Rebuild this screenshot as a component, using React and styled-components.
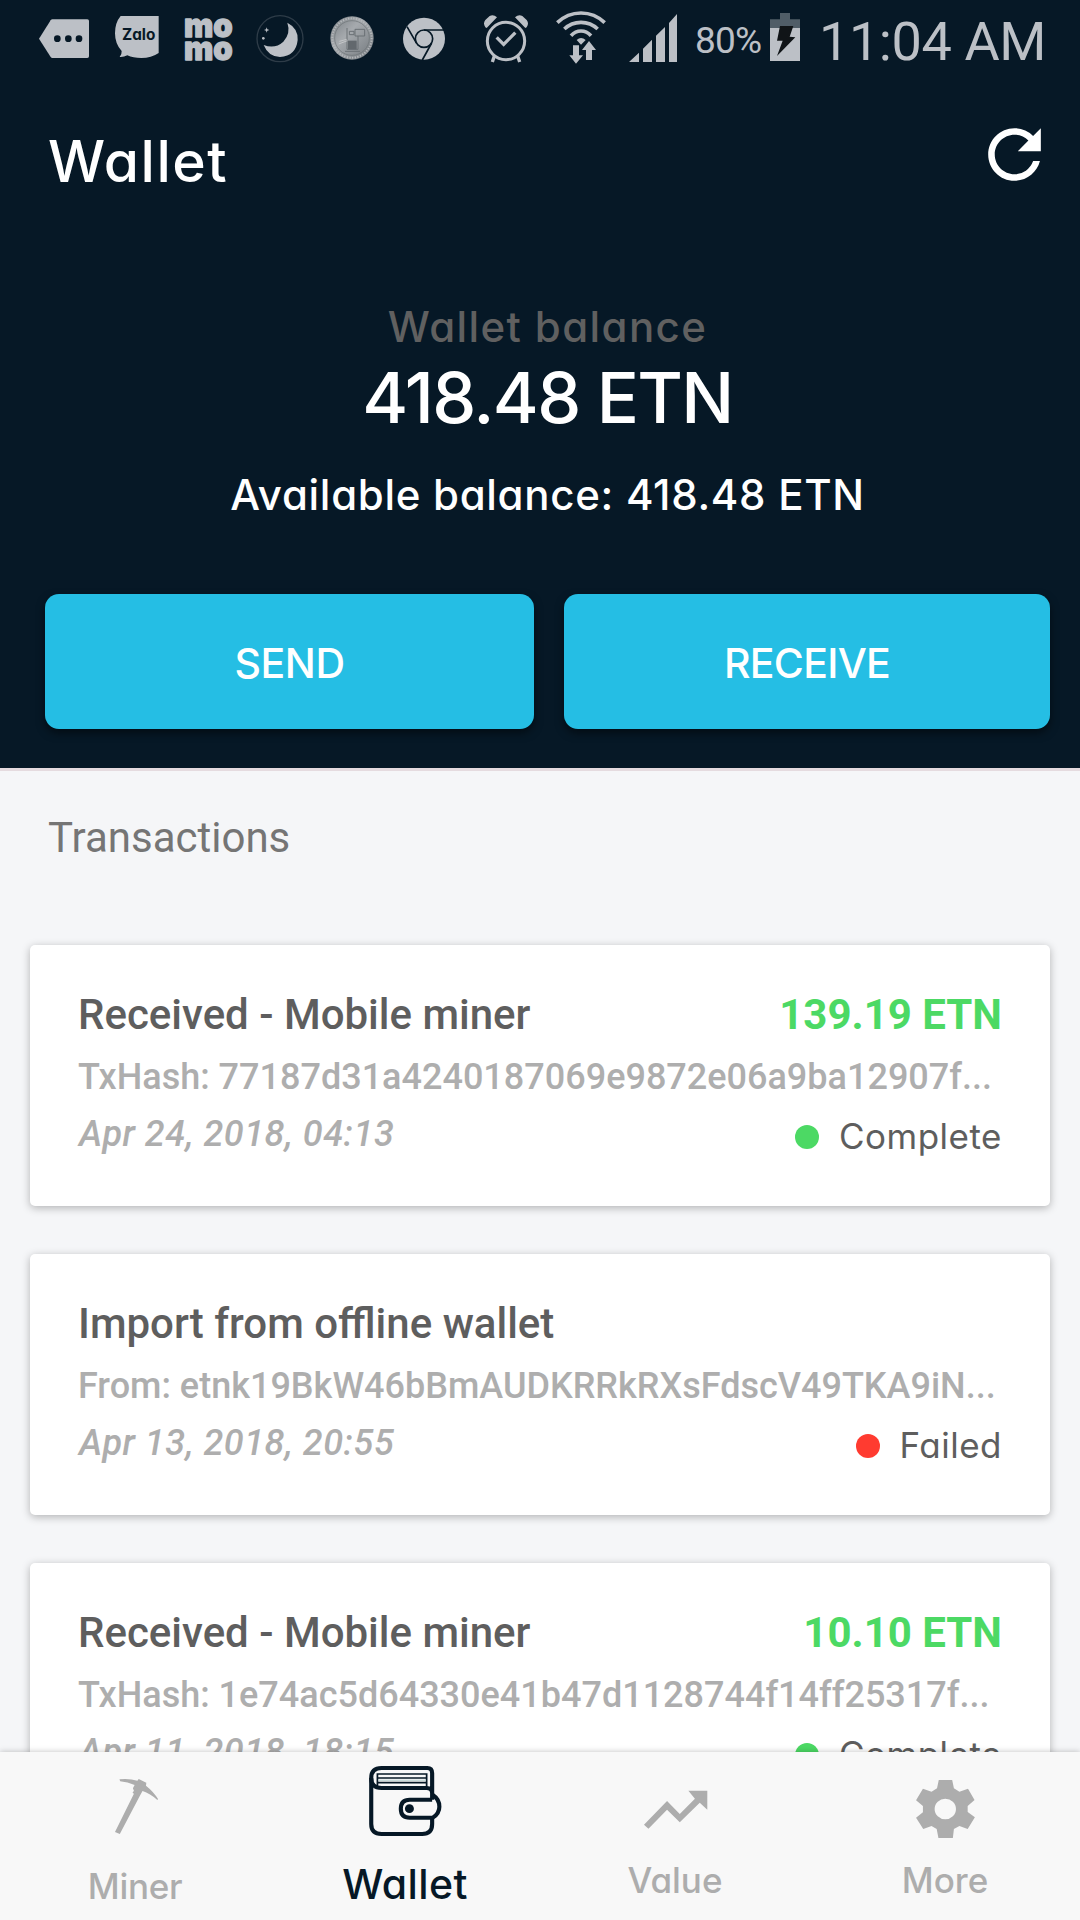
import React from 'react';
import styled, { createGlobalStyle } from 'styled-components';
import { MdRefresh } from 'react-icons/md';

const navy = '#061826';
const silver = '#bcc0c6';
const muted = '#adadad';
const rounded = `'Inter', 'Lato', sans-serif`;

const GlobalStyle = createGlobalStyle`
  * {
    box-sizing: border-box;
  }
  body {
    margin: 0;
    background: #f5f6f8;
    font-family: Roboto, sans-serif;
  }
  button {
    border: 0;
    padding: 0;
    background: none;
    font: inherit;
  }
`;

const Screen = styled.div`
  width: 1080px;
  height: 1920px;
  display: flex;
  flex-direction: column;
  overflow: hidden;
`;

const Header = styled.header`
  height: 771px;
  flex: none;
  background: ${navy};
  border-bottom: 3px solid #e5dbdf;
`;

const StatusBar = styled.div`
  height: 80px;
  display: flex;
  align-items: center;
  color: ${silver};
`;

const StatusIcon = styled.svg`
  flex: none;
  height: 80px;
  width: ${({ $width }) => $width}px;
  margin-left: ${({ $gap }) => $gap || 0}px;
  fill: currentColor;
  overflow: visible;
`;

const Percent = styled.span`
  width: 75px;
  margin-left: 18px;
  font-size: 37px;
  line-height: 80px;
  letter-spacing: -0.8px;
  padding-top: 1px;
`;

const Clock = styled.span`
  margin-left: auto;
  padding: 3px 34px 0 0;
  font-size: 54px;
  font-weight: 400;
  line-height: 80px;
  letter-spacing: -0.4px;
  white-space: nowrap;
`;

const AppBar = styled.div`
  height: 164px;
  display: flex;
  align-items: center;
  justify-content: space-between;
  padding: 0 26px 0 48px;
  color: #fff;
`;

const RefreshIcon = styled(MdRefresh)`
  font-size: 79px;
  margin-bottom: 15px;
`;

const RoundedText = styled.div`
  font-family: ${rounded};
  font-feature-settings: 'cv11', 'cv05' 0;
  font-size: ${({ $size }) => $size}px;
  line-height: ${({ $line }) => $line}px;
  letter-spacing: ${({ $track }) => $track || 0}px;
  font-weight: ${({ $weight }) => $weight || 500};
  color: ${({ $color }) => $color || '#fff'};
  white-space: nowrap;
`;

const Balance = styled.section`
  padding: 56px 30px 0 45px;
  display: flex;
  flex-direction: column;
  align-items: center;
`;

const Actions = styled.div`
  display: grid;
  grid-template-columns: 489px 486px;
  gap: 30px;
  padding: 47px 30px 0 45px;
`;

const ActionButton = styled.button`
  height: 135px;
  border-radius: 14px;
  background: #25bee4;
  box-shadow: 0 4px 8px rgba(0, 0, 0, 0.5);
  display: flex;
  align-items: center;
  justify-content: center;
  padding-top: 3px;
`;

const Transactions = styled.main`
  flex: 1;
  min-height: 0;
  overflow: hidden;
  background: #f5f6f8;
`;

const SectionTitle = styled.h2`
  margin: 0 0 42px;
  padding-left: 48px;
  font-size: 42px;
  font-weight: 400;
  line-height: 133px;
  height: 132px;
  color: #757575;
`;

const List = styled.div`
  display: flex;
  flex-direction: column;
  gap: 48px;
  padding: 0 30px;
`;

const Card = styled.article`
  height: 261px;
  flex: none;
  padding: 38px 48px 0 48px;
  border-radius: 5px;
  background: #fff;
  box-shadow: 0 2px 8px rgba(0, 0, 0, 0.28);
`;

const CardRow = styled.div`
  display: flex;
  justify-content: space-between;
  height: ${({ $height }) => $height}px;
  line-height: ${({ $height }) => $height + 1}px;
`;

const CardTitle = styled.div`
  font-size: 42px;
  font-weight: 500;
  color: #5e5e5e;
`;

const Amount = styled.div`
  font-size: 42px;
  font-weight: 700;
  color: #4cd964;
`;

const Hash = styled.div`
  padding-top: 1px;
  font-size: 36px;
  font-weight: 500;
  color: #aeaeae;
  white-space: nowrap;
`;

const DateText = styled(Hash)`
  padding-left: 1px;
  font-style: italic;
  letter-spacing: 0.55px;
`;

const Status = styled.div`
  display: flex;
  align-items: center;
  gap: 20px;
  padding-top: 7px;
`;

const Dot = styled.span`
  width: 24px;
  height: 24px;
  border-radius: 50%;
  background: ${({ $failed }) => ($failed ? '#ff3b30' : '#4cd964')};
`;

const StatusText = styled(RoundedText)`
  padding-bottom: 2px;
`;

const Nav = styled.nav`
  height: 168px;
  flex: none;
  display: grid;
  grid-template-columns: repeat(4, 1fr);
  background: #f8f8f8;
  box-shadow: 0 0 6px rgba(0, 0, 0, 0.25);
  z-index: 1;
`;

const Tab = styled.button`
  display: flex;
  flex-direction: column;
  align-items: center;
  color: ${({ $active }) => ($active ? navy : muted)};
`;

const TabIcon = styled.svg`
  width: 82.6px;
  height: 88px;
  flex: none;
  margin-bottom: ${({ $gap }) => $gap}px;
  fill: currentColor;
`;

const transactions = [
  {
    title: 'Received - Mobile miner',
    amount: '139.19 ETN',
    hash: 'TxHash: 77187d31a4240187069e9872e06a9ba12907f...',
    date: 'Apr 24, 2018, 04:13',
    status: 'Complete',
  },
  {
    title: 'Import from offline wallet',
    hash: 'From: etnk19BkW46bBmAUDKRRkRXsFdscV49TKA9iN...',
    date: 'Apr 13, 2018, 20:55',
    status: 'Failed',
  },
  {
    title: 'Received - Mobile miner',
    amount: '10.10 ETN',
    hash: 'TxHash: 1e74ac5d64330e41b47d1128744f14ff25317f...',
    date: 'Apr 11, 2018, 18:15',
    status: 'Complete',
  },
];

const StatusIcons = () => (
  <>
    <StatusIcon $width={50} $gap={39} viewBox="117 0 150 240">
      <path d="M157 58H262Q267 58 267 63V169Q267 174 262 174H157Q154 174 152 171L117 116L152 61Q154 58 157 58Z" />
      <g fill={navy}>
        <circle cx="172" cy="116" r="10" />
        <circle cx="205" cy="116" r="10" />
        <circle cx="237" cy="116" r="10" />
      </g>
    </StatusIcon>
    <StatusIcon $width={44} $gap={26} viewBox="346 0 132 240">
      <path d="M363 48H477V159Q455 174 425 174Q400 174 383 166Q372 172 360 171Q367 162 366 153Q346 132 346 100Q346 68 363 48Z" />
      <text x="367" y="120" fill={navy} fontFamily="Inter, sans-serif" fontWeight="700" fontSize="46" textLength="100" lengthAdjust="spacingAndGlyphs" style={{ fontFeatureSettings: "'cv11'" }}>
        Zalo
      </text>
    </StatusIcon>
    <StatusIcon $width={47} $gap={26} viewBox="555 0 141 240">
      <g
        fontFamily="Inter, sans-serif"
        fontWeight="900"
        fontSize="98"
        stroke="currentColor"
        strokeWidth="4"
        strokeLinejoin="round"
      >
        <text x="552" y="110" textLength="146" lengthAdjust="spacingAndGlyphs">mo</text>
        <text x="552" y="180" textLength="146" lengthAdjust="spacingAndGlyphs">mo</text>
      </g>
    </StatusIcon>
    <StatusIcon $width={48} $gap={24} viewBox="768 0 144 240">
      <circle cx="840" cy="116" r="69" fill="none" stroke="#2e3c48" strokeWidth="4" />
      <path d="M862 68Q895 85 893 120Q888 168 840 171Q805 170 791 135Q825 148 850 125Q873 100 862 68Z" />
      <path d="M800 82L802 88L808 90L802 92L800 98L798 92L792 90L798 88Z" />
      <circle cx="790" cy="115" r="4" />
    </StatusIcon>
    <StatusIcon $width={44} $gap={26} viewBox="990 0 132 240">
      <defs>
        <linearGradient id="coin" x1="0" y1="0" x2="1" y2="1">
          <stop offset="0" stopColor="#757b80" />
          <stop offset="0.4" stopColor="#a6aaae" />
          <stop offset="1" stopColor="#70767b" />
        </linearGradient>
      </defs>
      <circle cx="1056" cy="114" r="65" fill="url(#coin)" />
      <circle cx="1056" cy="114" r="59" fill="none" stroke="#b4b7ba" strokeWidth="6" strokeDasharray="4 4" />
      <circle cx="1056" cy="114" r="52" fill="none" stroke="#6c7276" strokeWidth="2" />
      <g fill="none" stroke="#6a7075" strokeWidth="3">
        <path d="M1041 84V148H1074V108M1048 94H1062V104H1048ZM1065 88H1094V108H1065Z" />
        <path d="M1016 132L1042 122M1018 124L1040 118" stroke="#c4c6c8" />
        <path d="M1035 154H1080" />
      </g>
      <rect x="1044" y="122" width="26" height="26" fill="#62686d" />
    </StatusIcon>
    <StatusIcon $width={43} $gap={29} viewBox="189 0 129 240">
      <circle cx="252" cy="116" r="63" />
      <g stroke={navy} strokeWidth="5" fill="none">
        <circle cx="252" cy="116" r="26" />
        <path d="M252 90H314M230 130L201 80M275 129L247 180" />
      </g>
    </StatusIcon>
    <StatusIcon $width={46} $gap={37} viewBox="429 0 138 240">
      <circle cx="498" cy="123" r="56" fill="none" stroke="currentColor" strokeWidth="9" />
      <path d="M470 112L491 133L526 98" fill="none" stroke="currentColor" strokeWidth="10" />
      <path d="M436 82Q428 70 436 60L449 48Q460 42 471 52L440 84ZM560 82Q568 70 560 60L547 48Q536 42 525 52L556 84Z" />
      <path d="M463 168L457 186M533 168L539 186" stroke="currentColor" strokeWidth="10" />
    </StatusIcon>
    <StatusIcon $width={50} $gap={27} viewBox="648 0 150 240">
      <g fill="none" stroke="currentColor" strokeWidth="11">
        <path d="M652 68Q682 39 723 39Q764 39 794 68" />
        <path d="M673 87Q694 67 723 67Q752 67 773 87" />
        <path d="M693 107Q706 93 723 93Q740 93 753 107" />
      </g>
      <path d="M710 120Q723 108 737 120L723 134Z" />
      <path d="M699 136H717V166H729L708 191L688 166H699Z" />
      <path d="M738 180H756V150H768L747 123L726 150H738Z" />
    </StatusIcon>
    <StatusIcon $width={48} $gap={23} viewBox="867 0 144 240">
      <path d="M867 186L897 158V186ZM909 186V146L936 119V186ZM948 186V107L975 81V186ZM987 186V69L1011 42V186Z" />
    </StatusIcon>
    <Percent>80%</Percent>
    <StatusIcon $width={30} viewBox="270 0 90 240">
      <path d="M300 39H330V58H360V84H270V58H300Z" fill="#505d67" />
      <path d="M270 84H360V183H270Z" />
      <path d="M300 78H340L329 110L346 112L291 168L308 122H291Z" fill="#101417" />
    </StatusIcon>
  </>
);

const Transaction = ({ title, amount, hash, date, status }) => (
  <Card>
    <CardRow $height={62}>
      <CardTitle>{title}</CardTitle>
      {amount && <Amount>{amount}</Amount>}
    </CardRow>
    <CardRow $height={62}>
      <Hash>{hash}</Hash>
    </CardRow>
    <CardRow $height={52}>
      <DateText>{date}</DateText>
      <Status>
        <Dot $failed={status === 'Failed'} />
        <StatusText $size={35} $line={52} $color="#5e5e5e" $weight={400} $track={0.5}>
          {status}
        </StatusText>
      </Status>
    </CardRow>
  </Card>
);

const App = () => (
  <Screen>
    <GlobalStyle />
    <Header>
      <StatusBar>
        <StatusIcons />
        <Clock>11:04 AM</Clock>
      </StatusBar>
      <AppBar>
        <RoundedText $size={57} $line={164} $track={1.5}>Wallet</RoundedText>
        <RefreshIcon />
      </AppBar>
      <Balance>
        <RoundedText $size={42} $line={53} $color="#606060" $track={1.4}>Wallet balance</RoundedText>
        <RoundedText $size={70} $line={89} $track={-1.6}>418.48 ETN</RoundedText>
        <RoundedText $size={42} $line={105} $track={0.7}>Available balance: 418.48 ETN</RoundedText>
      </Balance>
      <Actions>
        <ActionButton>
          <RoundedText $size={41} $line={60} $track={-0.4}>SEND</RoundedText>
        </ActionButton>
        <ActionButton>
          <RoundedText $size={41} $line={60} $track={-0.7}>RECEIVE</RoundedText>
        </ActionButton>
      </Actions>
    </Header>

    <Transactions>
      <SectionTitle>Transactions</SectionTitle>
      <List>
        {transactions.map((item, i) => (
          <Transaction key={i} {...item} />
        ))}
      </List>
    </Transactions>

    <Nav>
      <Tab>
        <TabIcon $gap={20.5} viewBox="272 96 240 264" preserveAspectRatio="none">
          <path d="M346 178Q375 175 398 182L402 177L424 188L423 197Q445 215 458 237L456 240Q435 220 413 213L405 228L347 342L333 336L388 221L384 218L388 212L385 205L390 195Q370 186 348 184Z" />
        </TabIcon>
        <RoundedText as="span" $size={35} $line={50} $color={muted} $track={-0.3}>Miner</RoundedText>
      </Tab>
      <Tab $active>
        <TabIcon $gap={19} viewBox="1056 96 240 264" preserveAspectRatio="none">
          <g fill="none" stroke="currentColor" strokeWidth="12">
            <path d="M1077 174V312Q1077 342 1107 342H1225Q1254 342 1254 312V296" />
            <path d="M1254 239V160Q1254 144 1240 144H1107Q1077 144 1077 174Q1077 204 1107 204H1238Q1254 204 1254 220" />
            <path d="M1254 239H1189Q1163 239 1163 266Q1163 293 1189 293H1256Q1275 280 1275 260Q1275 238 1256 225" />
            <path d="M1095 201V162H1238V201M1095 174H1238M1095 188H1238" strokeWidth="5" />
          </g>
          <path d="M1098 181H1236" stroke="#b9d0cf" strokeWidth="3" />
          <circle cx="1188" cy="266" r="13" />
        </TabIcon>
        <RoundedText as="span" $size={41} $line={50} $color={navy} $track={0.4}>Wallet</RoundedText>
      </Tab>
      <Tab>
        <TabIcon $gap={14.5} viewBox="272 96 240 264" preserveAspectRatio="none">
          <path d="M301 314L368 243L405 282L449 236L430 212H485V269L463 248L405 307L368 269L314 326Z" />
        </TabIcon>
        <RoundedText as="span" $size={35} $line={50} $color={muted}>Value</RoundedText>
      </Tab>
      <Tab>
        <TabIcon $gap={14.5} viewBox="1056 96 240 264" preserveAspectRatio="none">
          <path
            fillRule="evenodd"
            d="M1157 180H1196L1201 205L1217 215L1242 206L1261 240L1241 258V276L1262 292L1241 327L1217 318L1201 327L1198 354H1156L1151 327L1136 318L1112 327L1091 293L1111 277V258L1091 241L1111 206L1136 215L1152 205ZM1176 236A31 31 0 1 0 1176 298A31 31 0 1 0 1176 236Z"
          />
        </TabIcon>
        <RoundedText as="span" $size={35} $line={50} $color={muted}>More</RoundedText>
      </Tab>
    </Nav>
  </Screen>
);

export default App;
